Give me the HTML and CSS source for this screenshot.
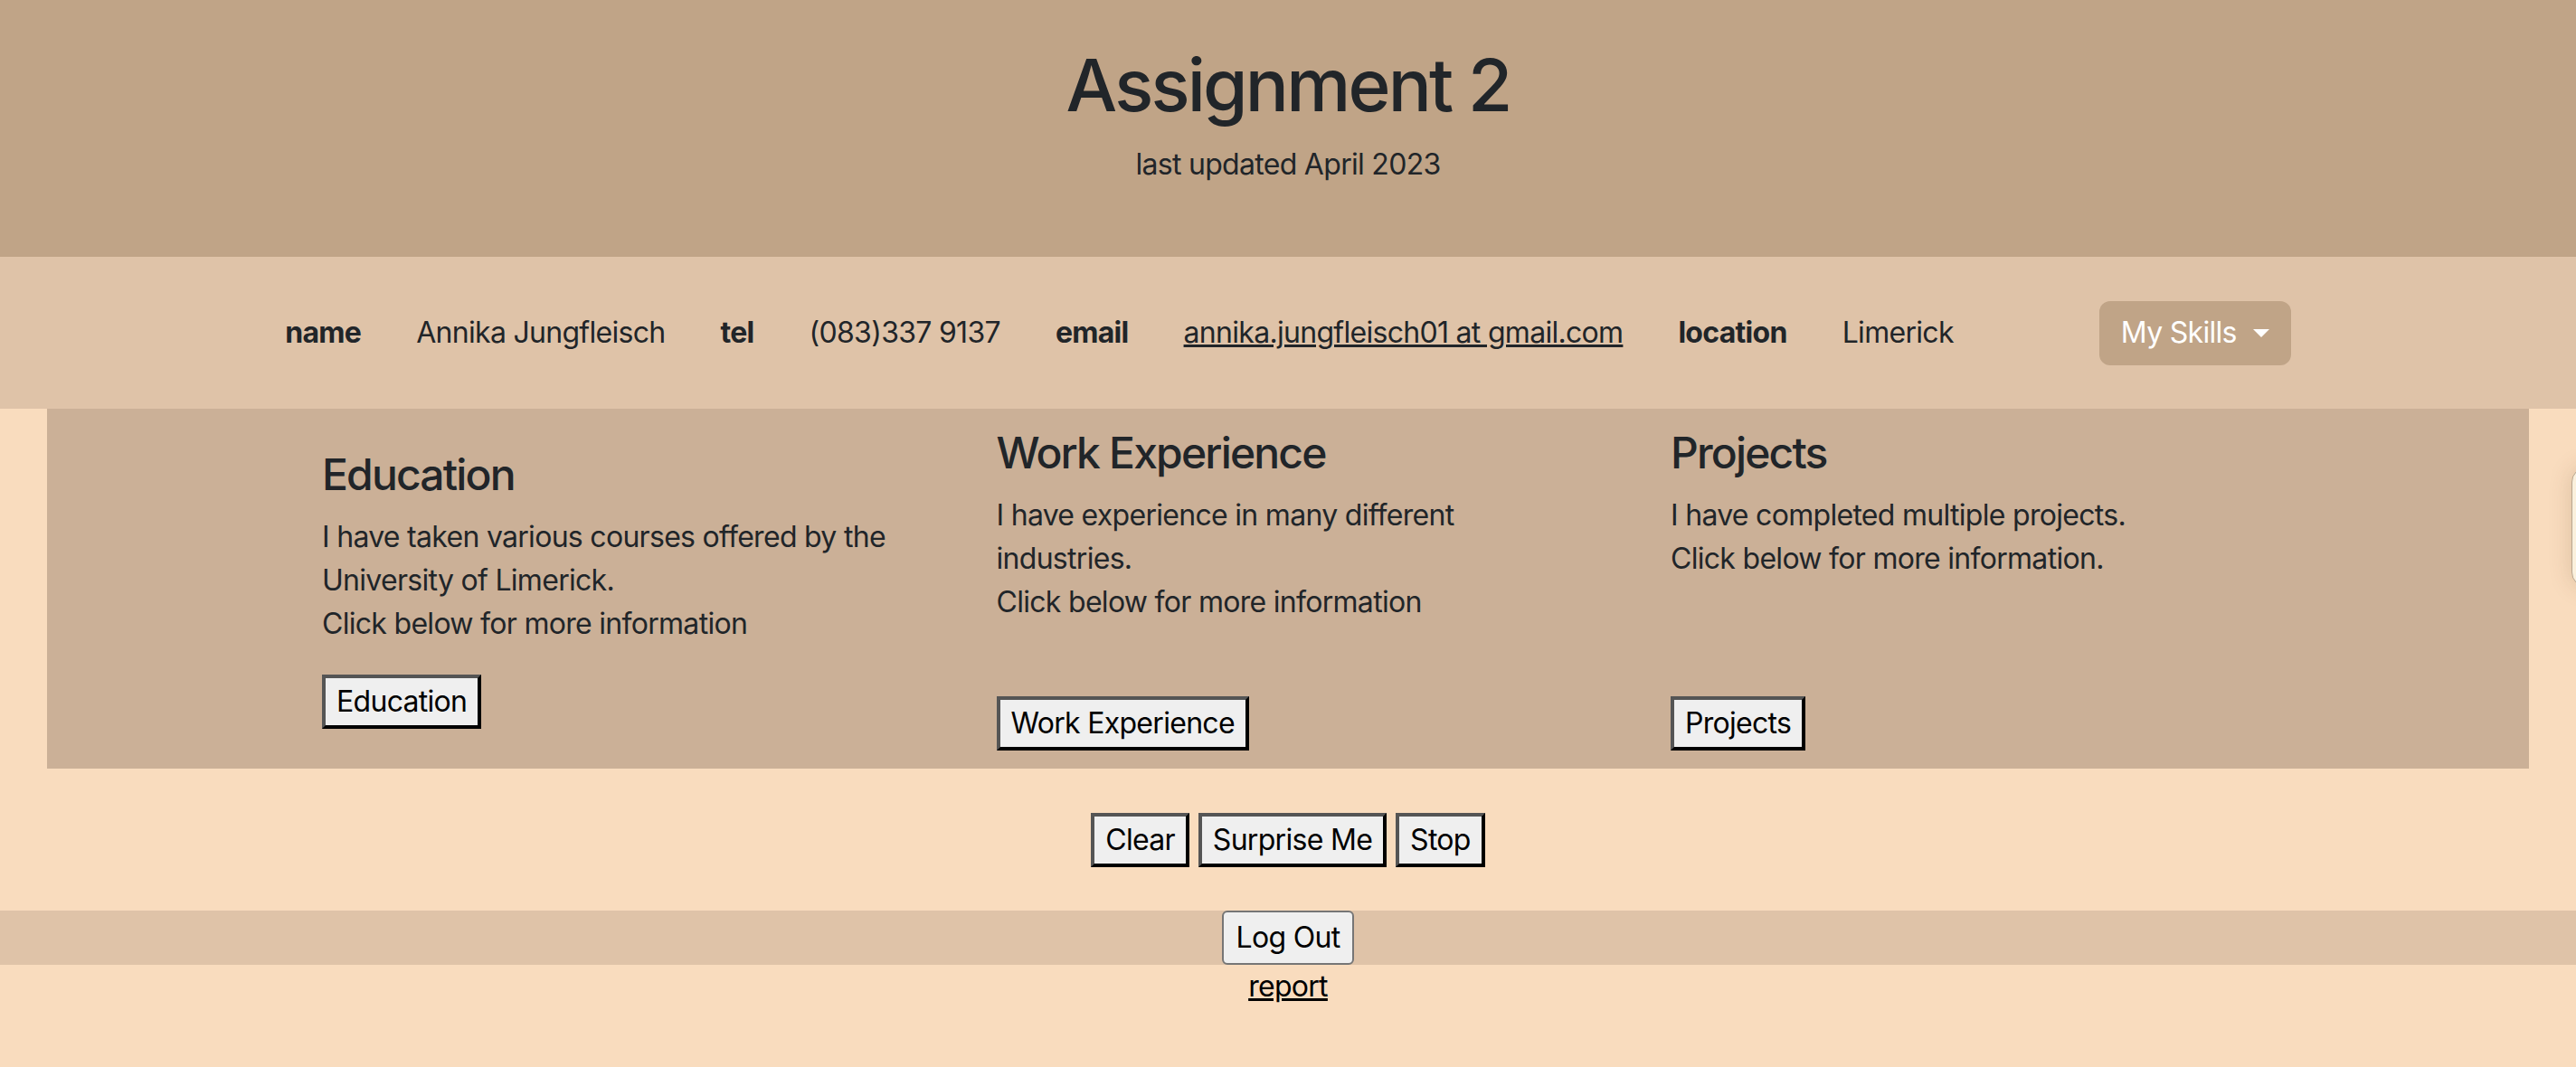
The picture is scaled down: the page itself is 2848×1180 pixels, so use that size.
FILE: index.html
```html
<!DOCTYPE html>
<html lang="en">
<head>
<meta charset="utf-8">
<title>Assignment 2</title>
<link rel="stylesheet" href="styles.css">
</head>
<body>
<header class="hero">
  <h1 class="hero-title">Assignment 2</h1>
  <p class="hero-sub">last updated April 2023</p>
</header>

<nav class="infobar">
  <span class="info-label">name</span>
  <span class="info-value">Annika Jungfleisch</span>
  <span class="info-label">tel</span>
  <span class="info-value">(083)337 9137</span>
  <span class="info-label">email</span>
  <a class="info-link" href="#">annika.jungfleisch01 at gmail.com</a>
  <span class="info-label">location</span>
  <span class="info-value">Limerick</span>
  <button class="skills-btn" type="button">My Skills<span class="caret"></span></button>
</nav>

<section class="cards">
  <div class="card-col">
    <h4 class="card-title">Education</h4>
    <p class="card-text">I have taken various courses offered by the University of Limerick.<br>Click below for more information</p>
    <button class="old-btn" type="button">Education</button>
  </div>
  <div class="card-col">
    <h4 class="card-title">Work Experience</h4>
    <p class="card-text four-lines">I have experience in many different industries.<br>Click below for more information</p>
    <button class="old-btn" type="button">Work Experience</button>
  </div>
  <div class="card-col">
    <h4 class="card-title">Projects</h4>
    <p class="card-text four-lines">I have completed multiple projects.<br>Click below for more information.</p>
    <button class="old-btn" type="button">Projects</button>
  </div>
</section>

<div class="actions">
  <button class="old-btn" type="button">Clear</button>
  <button class="old-btn" type="button">Surprise Me</button>
  <button class="old-btn" type="button">Stop</button>
</div>

<div class="logout-band">
  <button class="logout-btn" type="button">Log Out</button>
</div>
<div class="report-row">
  <a class="report-link" href="#">report</a>
</div>

<div class="edge-clip"><div class="side-tab"></div></div>
</body>
</html>
```

FILE: styles.css
```css
html, body {
  margin: 0;
  padding: 0;
}

body {
  background: #f9dcbe;
  color: #212529;
  font-family: Inter, "Noto Sans", "Liberation Sans", sans-serif;
  font-size: 32px;
  line-height: 1.5;
  letter-spacing: -0.022em;
  min-height: 1180px;
  overflow: hidden;
  position: relative;
}

.hero {
  background: #c0a487;
  text-align: center;
  padding: 46px 0 78px;
}

.hero-title {
  margin: 0 0 16px;
  font-size: 80px;
  font-weight: 500;
  line-height: 1.2;
  letter-spacing: -0.035em;
}

.hero-sub {
  margin: 0;
}

.infobar {
  background: #dfc3a8;
  height: 168px;
  display: flex;
  align-items: center;
  justify-content: center;
  gap: 61px;
}

.info-label {
  font-weight: 700;
}

.info-link {
  color: #212529;
  text-decoration: underline;
}

.skills-btn {
  margin-left: 100px;
  font: inherit;
  letter-spacing: inherit;
  line-height: 48px;
  color: #fff;
  background: #c0a487;
  border: 0;
  border-radius: 12px;
  padding: 11.5px 24px;
  display: inline-flex;
  align-items: center;
}

.caret {
  display: inline-block;
  margin-left: 18px;
  width: 0;
  height: 0;
  border-top: 9.6px solid #fff;
  border-left: 9.6px solid transparent;
  border-right: 9.6px solid transparent;
}

.cards {
  margin: 0 52px;
  background: #cbb097;
  display: grid;
  grid-template-columns: repeat(3, 745.5px);
  align-items: center;
  padding: 20px 0 20px 280px;
}

.card-col {
  padding: 0 24px;
}

.card-title {
  margin: 0 0 16px;
  font-size: 48px;
  font-weight: 500;
  line-height: 1.2;
  letter-spacing: -0.038em;
}

.card-text {
  margin: 0 0 32px;
  max-width: 640px;
}

.card-text.four-lines {
  min-height: 192px;
}

.old-btn {
  font: inherit;
  letter-spacing: inherit;
  line-height: 48px;
  color: #000;
  background: #efefef;
  padding: 2px 12px;
  border: 4px solid;
  border-color: #555 #000 #000 #555;
  border-radius: 0;
  margin: 0;
}

.actions {
  display: flex;
  justify-content: center;
  gap: 10px;
  margin: 49px 0 48px;
}

.logout-band {
  background: #dfc3a8;
  display: flex;
  justify-content: center;
}

.logout-btn {
  font: inherit;
  letter-spacing: inherit;
  line-height: 48px;
  color: #000;
  background: #efefef;
  padding: 4px 14px;
  border: 2px solid #767676;
  border-radius: 6px;
  margin: 0;
}

.report-row {
  text-align: center;
}

.report-link {
  color: #000;
  text-decoration: underline;
}

.edge-clip {
  position: absolute;
  right: 0;
  top: 480px;
  width: 60px;
  height: 210px;
  overflow: hidden;
}

.side-tab {
  margin: 37px 0 0 55px;
  width: 240px;
  height: 130px;
  border-radius: 16px;
  background: #fbf0dc;
  border: 1px solid #b8a690;
  box-shadow: 0 0 26px rgba(90, 60, 30, 0.18);
}
```
